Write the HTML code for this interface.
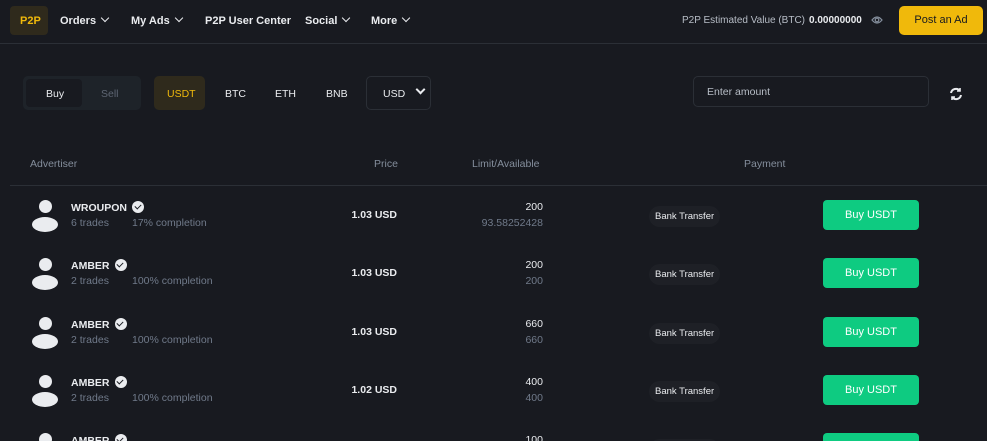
<!DOCTYPE html><html><head><meta charset="utf-8"><style>
*{margin:0;padding:0;box-sizing:border-box}
html,body{width:987px;height:441px;overflow:hidden}
body{background:#181a20;font-family:"Liberation Sans",sans-serif;color:#eaecef;position:relative}
.a{position:absolute;white-space:nowrap}
.n{font-size:11px;font-weight:bold;top:15px}
.car{display:inline-block;width:6px;height:6px;border-right:1.2px solid #eaecef;border-bottom:1.2px solid #eaecef;transform:rotate(45deg);margin-left:6px;position:relative;top:-3px}
.h{font-size:10.5px;color:#848e9c;top:158px}
.name{font-size:10.5px;font-weight:bold}
.sub{font-size:10.5px;color:#707a8a}
.price{font-size:10.5px;font-weight:bold;text-align:right;width:100px}
.lim{font-size:10.5px;text-align:right;width:100px}
.pill{font-size:9.5px;background:#1e2026;border-radius:12px;padding:5px 6px;color:#eaecef}
.btn{background:#0ecb81;border-radius:4px;width:96px;height:30px;color:#fff;font-size:11px;text-align:center;line-height:30px}
.chk{display:inline-block;width:12px;height:12px;border-radius:50%;background:#eaecef;vertical-align:-2px;margin-left:5px;position:relative}
.chk:after{content:"";position:absolute;left:3.5px;top:2px;width:3px;height:5px;border-right:1.6px solid #181a20;border-bottom:1.6px solid #181a20;transform:rotate(45deg)}
</style></head><body>
<div class="a" style="left:10px;top:6px;width:38px;height:29px;background:#2f2a1c;border-radius:4px"></div>
<div class="a n" style="left:20px;color:#f0b90b">P2P</div>
<div class="a n" style="left:60px">Orders<span class="car"></span></div>
<div class="a n" style="left:131px">My Ads<span class="car"></span></div>
<div class="a n" style="left:205px">P2P User Center</div>
<div class="a n" style="left:305px">Social<span class="car"></span></div>
<div class="a n" style="left:371px">More<span class="car"></span></div>
<div class="a" style="left:682px;top:15px;font-size:10px;color:#b7bdc6">P2P Estimated Value (BTC)</div>
<div class="a" style="left:809px;top:15px;font-size:10px;font-weight:bold">0.00000000</div>
<svg class="a" style="left:871px;top:15px" width="12" height="10" viewBox="0 0 12 10"><path d="M1 5Q6-1 11 5Q6 11 1 5Z" fill="none" stroke="#848e9c" stroke-width="1.2"/><circle cx="6" cy="5" r="1.8" fill="none" stroke="#848e9c" stroke-width="1.2"/></svg>
<div class="a" style="left:899px;top:6px;width:84px;height:29px;background:#f0b90b;border-radius:5px;color:#181a20;font-size:11px;text-align:center;line-height:29px">Post an Ad</div>
<div class="a" style="left:0;top:43px;width:987px;height:1px;background:#2b2f36"></div>

<div class="a" style="left:23px;top:76px;width:118px;height:34px;background:#1e2329;border-radius:5px"></div>
<div class="a" style="left:26px;top:79px;width:56px;height:28px;background:#181a20;border-radius:4px"></div>
<div class="a" style="left:46px;top:88px;font-size:10.5px">Buy</div>
<div class="a" style="left:101px;top:88px;font-size:10.5px;color:#5e6673">Sell</div>
<div class="a" style="left:154px;top:76px;width:51px;height:34px;background:#2f2a1c;border-radius:5px"></div>
<div class="a" style="left:167px;top:88px;font-size:10.5px;color:#f0b90b">USDT</div>
<div class="a" style="left:225px;top:88px;font-size:10.5px">BTC</div>
<div class="a" style="left:275px;top:88px;font-size:10.5px">ETH</div>
<div class="a" style="left:326px;top:88px;font-size:10.5px">BNB</div>
<div class="a" style="left:366px;top:76px;width:65px;height:34px;border:1px solid #2b2f36;border-radius:5px"></div>
<div class="a" style="left:383px;top:88px;font-size:10.5px">USD</div>
<div class="a" style="left:417px;top:86px;width:7px;height:7px;border-right:2px solid #eaecef;border-bottom:2px solid #eaecef;transform:rotate(45deg)"></div>
<div class="a" style="left:693px;top:76px;width:236px;height:31px;border:1px solid #2b2f36;border-radius:5px"></div>
<div class="a" style="left:707px;top:86px;font-size:10.5px;color:#b7bdc6">Enter amount</div>
<svg class="a" style="left:949px;top:87px" width="14" height="14" viewBox="0 0 14 14" fill="none" stroke="#eaecef" stroke-width="2"><path d="M2 6A5 5 0 0 1 11 4M12 8A5 5 0 0 1 3 10"/><path d="M11 1V4H8M3 13V10H6" stroke-width="1.6"/></svg>

<div class="a h" style="left:30px">Advertiser</div>
<div class="a h" style="left:374px">Price</div>
<div class="a h" style="left:472px">Limit/Available</div>
<div class="a h" style="left:744px">Payment</div>
<div class="a" style="left:10px;top:185px;width:977px;height:1px;background:#2b2f36"></div>

<div id="rows"></div>
<script>
var d=[["WROUPON","6 trades","17% completion","1.03 USD","200","93.58252428"],["AMBER","2 trades","100% completion","1.03 USD","200","200"],["AMBER","2 trades","100% completion","1.03 USD","660","660"],["AMBER","2 trades","100% completion","1.02 USD","400","400"],["AMBER","2 trades","100% completion","1.02 USD","100","100"]];
var h="";d.forEach(function(r,i){var y=216+i*58.3;
h+='<div class="a" style="left:39px;top:'+(y-16)+'px;width:13px;height:13px;border-radius:50%;background:#eaecef"></div>';
h+='<div class="a" style="left:32px;top:'+(y+1)+'px;width:26px;height:15px;border-radius:50%;background:#eaecef"></div>';
h+='<div class="a name" style="left:71px;top:'+(y-15)+'px">'+r[0]+'<span class="chk"></span></div>';
h+='<div class="a sub" style="left:71px;top:'+(y+1)+'px">'+r[1]+'</div>';
h+='<div class="a sub" style="left:132px;top:'+(y+1)+'px">'+r[2]+'</div>';
h+='<div class="a price" style="left:297px;top:'+(y-7)+'px">'+r[3]+'</div>';
h+='<div class="a lim" style="left:443px;top:'+(y-15)+'px">'+r[4]+'</div>';
h+='<div class="a lim sub" style="left:443px;top:'+(y+1)+'px">'+r[5]+'</div>';
h+='<div class="a pill" style="left:649px;top:'+(y-10)+'px">Bank Transfer</div>';
h+='<div class="a btn" style="left:823px;top:'+(y-16)+'px">Buy USDT</div>';});
document.getElementById("rows").innerHTML=h;
</script>
</body></html>
